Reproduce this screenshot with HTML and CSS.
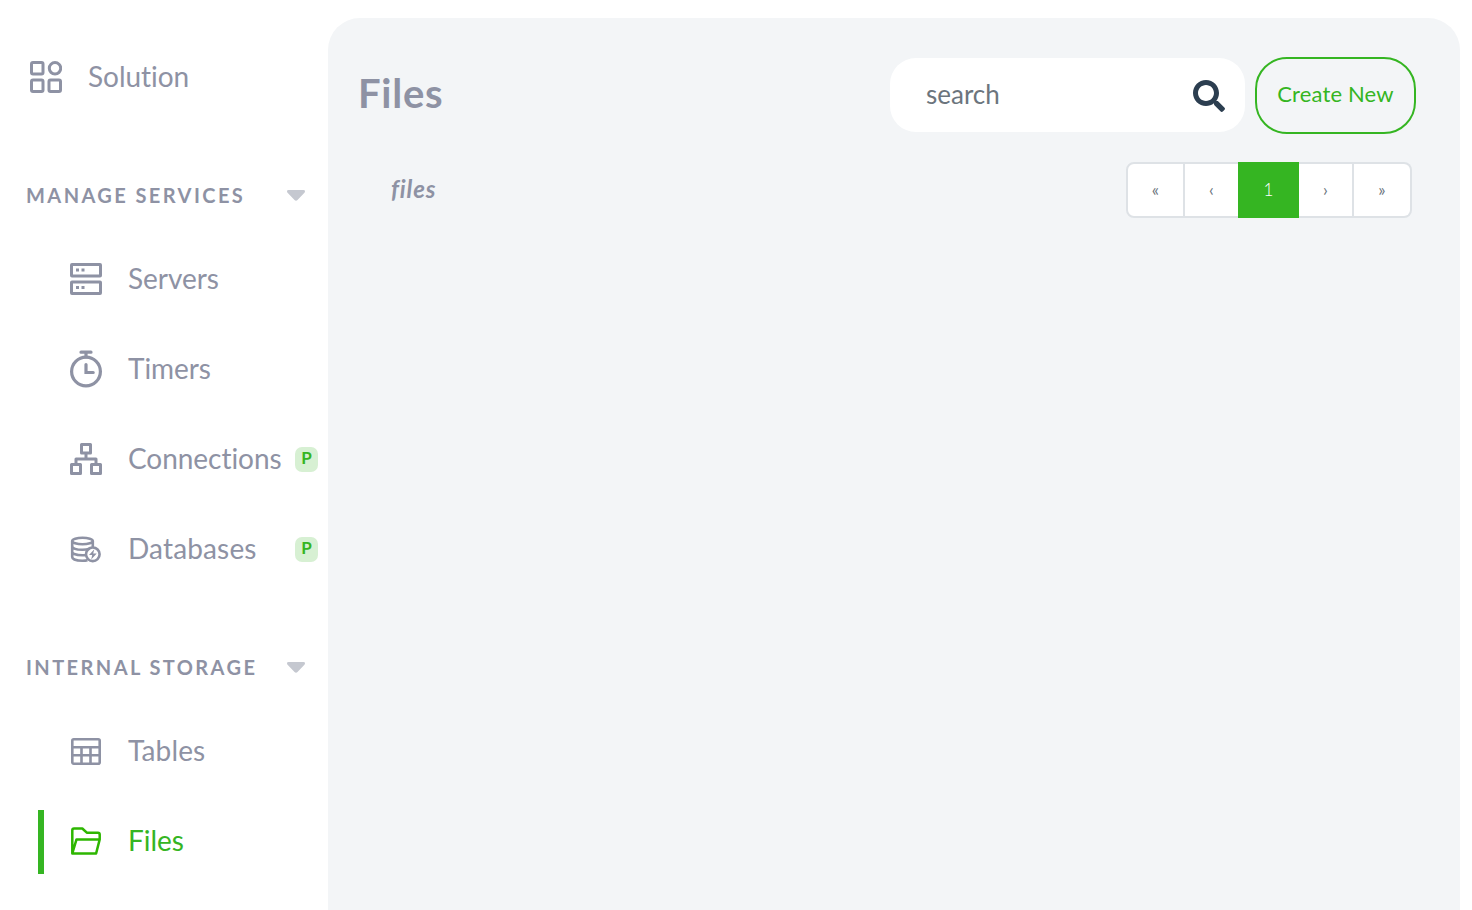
FILE: index.html
```html
<!DOCTYPE html>
<html lang="en">
<head>
<meta charset="utf-8">
<title>Files</title>
<link rel="stylesheet" href="styles.css">
</head>
<body>
<div class="app">
  <nav class="sidebar">
    <a class="item top">
      <svg class="icon" viewBox="0 0 32 32" width="32" height="32"><g fill="none" stroke="currentColor" stroke-width="3"><rect x="1.5" y="1.5" width="11.5" height="11.5" rx="1.5"/><circle cx="25" cy="7.3" r="5.7"/><rect x="1.5" y="19" width="11.5" height="11.5" rx="1.5"/><rect x="19" y="19" width="11.5" height="11.5" rx="1.5"/></g></svg>
      <span class="label">Solution</span>
    </a>
    <section class="group">
      <h2 class="heading"><span>MANAGE SERVICES</span>
        <svg class="caret" viewBox="0 0 18 11" width="18" height="11"><path d="M1.5 0h15Q18 0 18 1.3 18 2.4 17.2 3.1L10.500 10Q9 11.500 7.500 10L.8 3.100Q0 2.400 0 1.300 0 0 1.500 0z" fill="currentColor"/></svg>
      </h2>
      <a class="item">
        <svg class="icon" viewBox="0 0 32 32" width="32" height="32"><g fill="none" stroke="currentColor" stroke-width="3"><rect x="1.5" y="1.5" width="29" height="11.500" rx=".5"/><rect x="1.5" y="19" width="29" height="11.500" rx=".5"/></g><path d="M6 5.500h3v3H6zM11.500 5.500h3v3h-3zM6 23h3v3H6zM11.500 23h3v3h-3z" fill="currentColor"/></svg>
        <span class="label">Servers</span>
      </a>
      <a class="item">
        <svg class="icon" viewBox="0 0 32 38" width="32" height="38"><g fill="none" stroke="currentColor" stroke-width="3.2" stroke-linecap="round"><circle cx="16" cy="21.500" r="14.400"/><path d="M11 2.200h10M16 3v4M16 14.500v8h7.200"/></g></svg>
        <span class="label">Timers</span>
      </a>
      <a class="item">
        <svg class="icon" viewBox="0 0 32 32" width="32" height="32"><g fill="none" stroke="currentColor" stroke-width="3" stroke-linejoin="round"><rect x="11.500" y="1.500" width="9" height="8.500"/><rect x="1.500" y="21.500" width="9" height="9"/><rect x="21.500" y="21.500" width="9" height="9"/><path d="M16 10v6M6 21.500V16h20v5.500"/></g></svg>
        <span class="label">Connections</span>
        <span class="badge">P</span>
      </a>
      <a class="item">
        <svg class="icon database" viewBox="0 0 32 32" width="32" height="32"><g fill="none" stroke="currentColor" stroke-width="2.600"><ellipse cx="12.500" cy="7" rx="10.300" ry="3.300"/><path d="M2.200 7v16c0 2.200 4.600 3.700 10.300 3.700 2 0 3.500-.1 5-.5M22.800 7v6.500M2.200 12.300c0 2.200 4.600 3.500 10.300 3.500 2.500 0 5-.3 7-1M2.200 17.700c0 2.200 4.600 3.500 10.300 3.500h2.500"/><circle cx="22.800" cy="20.300" r="6.800"/></g><path d="M24.300 15.300l-5.300 5.700h3.200l-1 4.400 5.500-6h-3.500z" fill="currentColor"/></svg>
        <span class="label databases">Databases</span>
        <span class="badge">P</span>
      </a>
    </section>
    <section class="group">
      <h2 class="heading"><span>INTERNAL STORAGE</span>
        <svg class="caret" viewBox="0 0 18 11" width="18" height="11"><path d="M1.5 0h15Q18 0 18 1.3 18 2.4 17.2 3.1L10.500 10Q9 11.500 7.500 10L.8 3.100Q0 2.400 0 1.300 0 0 1.500 0z" fill="currentColor"/></svg>
      </h2>
      <a class="item">
        <svg class="icon" viewBox="0 0 32 32" width="32" height="32"><g fill="none" stroke="currentColor" stroke-width="2.600"><rect x="2.300" y="4.200" width="27.400" height="24.500" rx="1.500"/><path d="M2 12.300h28M2 20.300h28M11.500 12.300v16.500M20.500 12.300v16.500"/></g></svg>
        <span class="label databases">Tables</span>
      </a>
      <a class="item active">
        <svg class="icon" viewBox="0 0 32 32" width="32" height="32"><path d="M2.300 28.500V5.200q0-1.700 1.700-1.700h8.300l4.500 4.200H28q1.700 0 1.700 1.700v5l-3.600 14.100H2.300L6.500 14.400h23.200" fill="none" stroke="#2db600" stroke-width="2.500" stroke-linejoin="round"/></svg>
        <span class="label">Files</span>
      </a>
    </section>
  </nav>
  <main class="panel">
    <header class="bar">
      <h1 class="title">Files</h1>
      <div class="search">
        <span class="placeholder">search</span>
        <svg viewBox="0 0 512 512" width="32" height="32"><path fill="#2c3e50" d="M505 442.700L405.300 343c-4.500-4.500-10.600-7-17-7H372c27.600-35.300 44-79.700 44-128C416 93.100 322.900 0 208 0S0 93.100 0 208s93.100 208 208 208c48.300 0 92.700-16.400 128-44v16.300c0 6.400 2.500 12.500 7 17l99.700 99.700c9.400 9.400 24.600 9.400 33.900 0l28.300-28.300c9.400-9.400 9.400-24.600.1-34zM208 336c-70.700 0-128-57.200-128-128 0-70.700 57.200-128 128-128 70.700 0 128 57.200 128 128 0 70.700-57.200 128-128 128z"/></svg>
      </div>
      <button class="create">Create New</button>
    </header>
    <div class="subbar">
      <em class="crumb">files</em>
      <div class="pages">
        <span class="page first">«</span>
        <span class="page">‹</span>
        <span class="page current">1</span>
        <span class="page next">›</span>
        <span class="page last">»</span>
      </div>
    </div>
  </main>
</div>
</body>
</html>
```
FILE: styles.css
```css
* { box-sizing: border-box; }
body {
  margin: 0;
  background: #fff;
  color: #8e92a4;
  font-family: Lato, "Liberation Sans", sans-serif;
  font-variant-ligatures: none;
}
.app { display: flex; height: 910px; overflow: hidden; }

.sidebar { flex: none; width: 328px; padding-top: 32px; }
.item {
  display: flex;
  align-items: center;
  position: relative;
  height: 90px;
  padding: 0 10px 0 70px;
}
.item.top { padding-left: 30px; }
.icon { flex: none; margin-right: 26px; }
.database { margin-top: 1px; }
.label {
  padding-bottom: 2px;
  font-size: 28px;
  line-height: 36px;
  letter-spacing: -0.05px;
  white-space: nowrap;
}
.databases { letter-spacing: 0.15px; }
.group { padding-top: 34px; }
.heading {
  display: flex;
  align-items: center;
  justify-content: space-between;
  height: 78px;
  margin: 0;
  padding: 0 23px 0 26px;
  font-size: 20px;
  font-weight: 700;
  line-height: 26px;
  letter-spacing: 2.42px;
}
.caret { color: #c5c8d0; }
.badge {
  width: 23px;
  height: 25px;
  margin: 1px 0 0 auto;
  border-radius: 7px;
  background: #d7f0d3;
  color: #35b522;
  font-size: 17px;
  font-weight: 700;
  line-height: 22px;
  text-align: center;
}
.active { color: #35b522; }
.active::before {
  content: "";
  position: absolute;
  left: 38px;
  top: 14px;
  width: 6px;
  height: 64px;
  background: #35b522;
}

.panel {
  flex: none;
  width: 1132px;
  height: 892px;
  margin-top: 18px;
  padding: 39px 44px 0 30px;
  border-radius: 32px 32px 0 0;
  background: #f3f5f7;
}
.bar { display: flex; align-items: flex-start; height: 77px; }
.title {
  margin: 0 auto 0 0;
  padding-top: 11px;
  font-size: 40px;
  font-weight: 700;
  line-height: 50px;
  letter-spacing: 0.75px;
}
.search {
  display: flex;
  align-items: center;
  justify-content: space-between;
  width: 355px;
  height: 74px;
  margin: 1px 10px 0 0;
  padding: 0 20.5px 0 36px;
  border-radius: 26px;
  background: #fff;
}
.search svg { margin-top: 2px; }
.placeholder { padding-bottom: 2px; color: #6c757d; font-size: 26px; line-height: 36px; }
.create {
  width: 161px;
  height: 77px;
  padding: 0 0 4px;
  border: 2px solid #35b522;
  border-radius: 32px;
  background: transparent;
  color: #35b522;
  font-family: inherit;
  font-size: 22px;
  letter-spacing: 0.15px;
  white-space: nowrap;
}
.subbar {
  display: flex;
  align-items: flex-start;
  justify-content: space-between;
  padding: 28px 4px 0 33px;
}
.crumb {
  padding-top: 11px;
  font-size: 24px;
  font-weight: 700;
  line-height: 32px;
  letter-spacing: 0.9px;
}
.pages {
  display: grid;
  grid-template-columns: 59px 53px 61px 55px 58px;
  height: 56px;
}
.page {
  display: flex;
  align-items: center;
  justify-content: center;
  padding-bottom: 2px;
  border: solid #dee2e6;
  border-width: 2px 0;
  background: #fff;
  color: #6c757d;
  font-size: 17px;
}
.first { border-width: 2px; border-radius: 8px 0 0 8px; }
.next { border-right-width: 2px; }
.last { border-right-width: 2px; border-radius: 0 8px 8px 0; }
.current { border-color: #35b522; background: #35b522; color: #fff; font-weight: 300; }
```
